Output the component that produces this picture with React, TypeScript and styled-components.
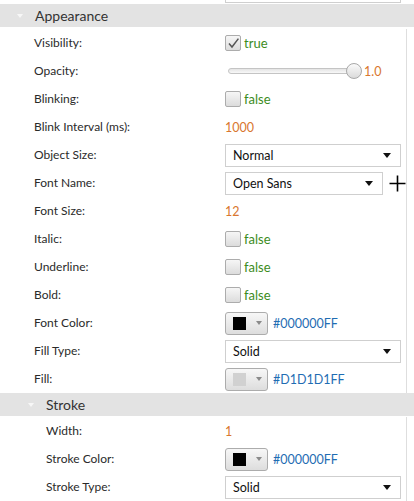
import React from 'react'
import styled, {createGlobalStyle} from 'styled-components'

const GlobalStyle = createGlobalStyle`
  html, body {
    margin: 0;
    padding: 0;
    background: #ffffff;
  }
  body {
    font-family: Lato, "Open Sans", "Liberation Sans", sans-serif;
    color: #222;
  }
`

const Panel = styled.div`
  width: 414px;
  height: 501px;
  overflow: hidden;
  background: #fff;
`

const TopStub = styled.div`
  height: 4px;
  display: grid;
  grid-template-columns: 225px 176px;
`

const StubBox = styled.div`
  grid-column: 2;
  height: 2px;
  border: 1px solid #cfcfcf;
  border-top: none;
`

const SectionHeader = styled.div<{$indent: number; $gap: number}>`
  height: 23px;
  margin-bottom: ${p => p.$gap}px;
  background: #e3e3e3;
  display: flex;
  align-items: center;
  padding-left: ${p => p.$indent}px;
  font-size: 14px;
  color: #333;
`

const Caret = styled.span`
  width: 0;
  height: 0;
  border-left: 3px solid transparent;
  border-right: 3px solid transparent;
  border-top: 4px solid #f7f7f7;
  margin-right: 12px;
`

const Rows = styled.div<{$closed?: boolean}>`
  width: 406px;
  border-right: 1px solid #dedede;
  border-bottom: ${p => (p.$closed ? '1px solid #dedede' : 'none')};
`

const Row = styled.div<{$indent: number}>`
  height: 28px;
  display: grid;
  grid-template-columns: 225px 1fr;
  align-items: center;
  font-size: 12px;
  & > :first-child {
    padding-left: ${p => p.$indent}px;
  }
`

const Label = styled.span`
  color: #2a2a2a;
  white-space: nowrap;
  margin-top: -1px;
`

const Value = styled.div`
  display: flex;
  align-items: center;
  min-width: 0;
`

const Number = styled.span`
  color: #d9772f;
  font-size: 12.5px;
`

const BoolText = styled.span`
  color: #3c8c1c;
  font-size: 13px;
  margin-left: 3px;
`

const HexText = styled.span`
  color: #1f6db3;
  font-size: 12.5px;
  margin-left: 5px;
`

const Box = styled.span`
  width: 14px;
  height: 14px;
  border: 1px solid #acacac;
  border-radius: 2px;
  background: linear-gradient(#f6f6f6, #dcdcdc);
  display: flex;
  align-items: center;
  justify-content: center;
`

const Select = styled.div<{$width: number}>`
  width: ${p => p.$width}px;
  height: 23px;
  box-sizing: border-box;
  border: 1px solid #cfcfcf;
  background: #fff;
  display: flex;
  align-items: center;
  justify-content: space-between;
  padding: 0 9px 0 7px;
  font-size: 12.5px;
  color: #111;
`

const DownArrow = styled.span<{$color?: string; $size?: number}>`
  width: 0;
  height: 0;
  border-left: ${p => p.$size ?? 4}px solid transparent;
  border-right: ${p => p.$size ?? 4}px solid transparent;
  border-top: ${p => (p.$size ?? 4) + 1}px solid ${p => p.$color ?? '#111'};
`

const ColorButton = styled.div`
  width: 43px;
  height: 23px;
  box-sizing: border-box;
  border: 1px solid #acacac;
  border-radius: 3px;
  background: linear-gradient(#f7f7f7, #dddddd);
  display: flex;
  align-items: center;
  padding-left: 7px;
  gap: 10px;
`

const Swatch = styled.span<{$color: string}>`
  width: 13px;
  height: 13px;
  background: ${p => p.$color};
`

const Slider = styled.div`
  width: 134px;
  height: 16px;
  display: flex;
  align-items: center;
  position: relative;
  margin-left: 3px;
`

const Track = styled.div`
  flex: 1;
  height: 4px;
  margin-right: 4px;
  border: 1px solid #c4c4c4;
  border-radius: 3px;
  background: linear-gradient(#e4e4e4, #f8f8f8);
`

const Thumb = styled.div`
  position: absolute;
  right: 0;
  top: 0;
  width: 14px;
  height: 14px;
  border: 1px solid #a8a8a8;
  border-radius: 50%;
  background: linear-gradient(#fafafa, #dadada);
`

const PlusButton = styled.span`
  margin-left: 6px;
  display: flex;
`

function Check({checked}: {checked: boolean}) {
  return (
    <Value>
      <Box>
        {checked && (
          <svg width="13" height="13" viewBox="0 0 13 13">
            <path d="M2 6.6 L5 10 L11.4 1.6" fill="none" stroke="#555" strokeWidth="1.5" />
          </svg>
        )}
      </Box>
      <BoolText>{checked ? 'true' : 'false'}</BoolText>
    </Value>
  )
}

function Dropdown({text, width = 176}: {text: string; width?: number}) {
  return (
    <Select $width={width}>
      <span>{text}</span>
      <DownArrow />
    </Select>
  )
}

function ColorPick({color, hex}: {color: string; hex: string}) {
  return (
    <Value>
      <ColorButton>
        <Swatch $color={color} />
        <DownArrow $color="#8a8a8a" $size={3} />
      </ColorButton>
      <HexText>{hex}</HexText>
    </Value>
  )
}

type Prop = {label: string; value: React.ReactNode}

const appearance: Prop[] = [
  {label: 'Visibility:', value: <Check checked />},
  {
    label: 'Opacity:',
    value: (
      <Value>
        <Slider>
          <Track />
          <Thumb />
        </Slider>
        <Number style={{marginLeft: 2}}>1.0</Number>
      </Value>
    ),
  },
  {label: 'Blinking:', value: <Check checked={false} />},
  {label: 'Blink Interval (ms):', value: <Number>1000</Number>},
  {label: 'Object Size:', value: <Dropdown text="Normal" />},
  {
    label: 'Font Name:',
    value: (
      <Value>
        <Dropdown text="Open Sans" width={162} />
        <PlusButton>
          <svg width="17" height="17" viewBox="0 0 17 17">
            <path d="M8.5 0.5 V16.5 M0.5 8.5 H16.5" stroke="#000" strokeWidth="1.6" />
          </svg>
        </PlusButton>
      </Value>
    ),
  },
  {label: 'Font Size:', value: <Number>12</Number>},
  {label: 'Italic:', value: <Check checked={false} />},
  {label: 'Underline:', value: <Check checked={false} />},
  {label: 'Bold:', value: <Check checked={false} />},
  {label: 'Font Color:', value: <ColorPick color="#000" hex="#000000FF" />},
  {label: 'Fill Type:', value: <Dropdown text="Solid" />},
  {label: 'Fill:', value: <ColorPick color="#d1d1d1" hex="#D1D1D1FF" />},
]

const stroke: Prop[] = [
  {label: 'Width:', value: <Number>1</Number>},
  {label: 'Stroke Color:', value: <ColorPick color="#000" hex="#000000FF" />},
  {label: 'Stroke Type:', value: <Dropdown text="Solid" />},
]

export default function App() {
  return (
    <Panel>
      <GlobalStyle />
      <TopStub>
        <StubBox />
      </TopStub>
      <SectionHeader $indent={17} $gap={2}>
        <Caret />
        Appearance
      </SectionHeader>
      <Rows>
        {appearance.map(p => (
          <Row key={p.label} $indent={34}>
            <Label>{p.label}</Label>
            {p.value}
          </Row>
        ))}
      </Rows>
      <SectionHeader $indent={28} $gap={1}>
        <Caret />
        Stroke
      </SectionHeader>
      <Rows $closed>
        {stroke.map(p => (
          <Row key={p.label} $indent={46}>
            <Label>{p.label}</Label>
            {p.value}
          </Row>
        ))}
      </Rows>
    </Panel>
  )
}
